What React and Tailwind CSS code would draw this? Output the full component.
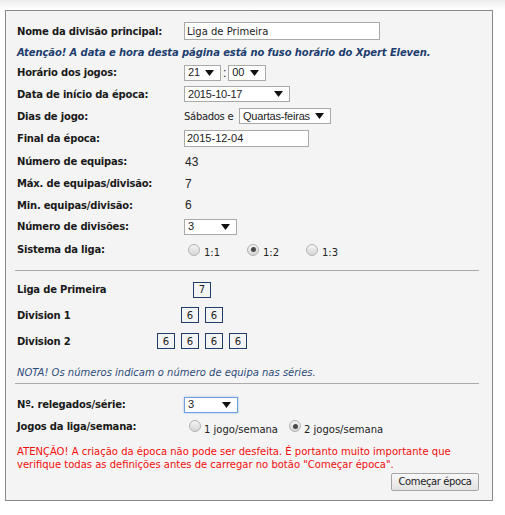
import { useState } from 'react';

const VERDANA = "font-['DejaVu_Sans',Verdana,sans-serif]";
const ARIAL = "font-['Liberation_Sans',Arial,sans-serif]";

function Caret() {
  return (
    <svg width="9" height="6" viewBox="0 0 9 6" className="shrink-0">
      <path d="M0 0 H9 L4.5 6 Z" fill="#111" />
    </svg>
  );
}

function FakeSelect({ value, width, focused }) {
  return (
    <div
      className={`flex items-center justify-between h-[16px] bg-white pl-[3px] pr-[6px] text-[11px] leading-none whitespace-nowrap text-[#222] ${ARIAL} ${
        focused
          ? 'border border-[#6e9fe0] shadow-[0_0_2px_#9cc1f0]'
          : 'border border-[#a9a9a9]'
      }`}
      style={{ width }}
    >
      <span className="tracking-[-0.2px]">{value}</span>
      <Caret />
    </div>
  );
}

function Radio({ checked }) {
  return (
    <span className="relative inline-flex items-center justify-center w-[12px] h-[12px] rounded-full border border-[#b3b3b3] bg-gradient-to-b from-[#f4f4f4] to-[#d6d6d6] shrink-0">
      {checked && <span className="w-[5px] h-[5px] rounded-full bg-[#4a4a4a]" />}
    </span>
  );
}

function Row({ label, h, children }) {
  return (
    <div className="flex items-center" style={{ height: h }}>
      <div className="w-[167px] shrink-0 font-bold text-[10px] tracking-[-0.2px] text-[#1a1a1a] whitespace-nowrap">
        {label}
      </div>
      <div className="flex items-center">{children}</div>
    </div>
  );
}

function TeamBox({ n }) {
  return (
    <div className="w-[18px] h-[16px] border border-[#1f3d6b] flex items-center justify-center text-[10px] text-[#222]">
      {n}
    </div>
  );
}

export default function App() {
  const [system, setSystem] = useState('1:2');
  const [games, setGames] = useState(2);

  const divisions = [
    { name: 'Liga de Primeira', teams: [7], h: 25 },
    { name: 'Division 1', teams: [6, 6], h: 26 },
    { name: 'Division 2', teams: [6, 6, 6, 6], h: 26 },
  ];

  return (
    <div className={`w-[505px] h-[515px] bg-white ${VERDANA}`}>
      <div className="h-[10px] bg-gradient-to-b from-[#ececec] to-white" />
      <div className="ml-[5px] w-[488px] h-[491px] border border-[#8a8a8a] bg-[#f4f4f4] pl-[11px] pr-[13px] pt-[9px]">
        <Row label="Nome da divisão principal:" h={22}>
          <div className="w-[196px] h-[18px] bg-white border border-[#a9a9a9] pl-[2px] flex items-center text-[10px] text-[#222]">
            Liga de Primeira
          </div>
        </Row>
        <div className="h-[20px] flex items-center text-[10px] tracking-[-0.1px] font-bold italic text-[#1d3d6e] whitespace-nowrap">
          Atenção! A data e hora desta página está no fuso horário do Xpert Eleven.
        </div>
        <Row label="Horário dos jogos:" h={21}>
          <FakeSelect value="21" width={37} />
          <span className={`mx-[2px] text-[12px] text-[#222] ${ARIAL}`}>:</span>
          <FakeSelect value="00" width={38} />
        </Row>
        <Row label="Data de início da época:" h={22}>
          <FakeSelect value="2015-10-17" width={106} />
        </Row>
        <Row label="Dias de jogo:" h={22}>
          <span className="w-[55px] text-[10px] tracking-[-0.3px] text-[#222] whitespace-nowrap">Sábados e</span>
          <FakeSelect value="Quartas-feiras" width={92} />
        </Row>
        <Row label="Final da época:" h={23}>
          <div className={`w-[125px] h-[17px] bg-white border border-[#a9a9a9] pl-[2px] flex items-center text-[11px] text-[#222] ${ARIAL}`}>
            2015-12-04
          </div>
        </Row>
        <Row label="Número de equipas:" h={23}>
          <span className={`text-[12px] text-[#222] ml-[1px] ${ARIAL}`}>43</span>
        </Row>
        <Row label="Máx. de equipas/divisão:" h={21}>
          <span className={`text-[12px] text-[#222] ml-[1px] ${ARIAL}`}>7</span>
        </Row>
        <Row label="Min. equipas/divisão:" h={22}>
          <span className={`text-[12px] text-[#222] ml-[1px] ${ARIAL}`}>6</span>
        </Row>
        <Row label="Número de divisões:" h={21}>
          <FakeSelect value="3" width={53} />
        </Row>
        <Row label="Sistema da liga:" h={25}>
          <div className="flex items-center ml-[4px]">
            {['1:1', '1:2', '1:3'].map((s) => (
              <label
                key={s}
                className="w-[59px] flex items-center gap-[4px] cursor-pointer"
                onClick={() => setSystem(s)}
              >
                <Radio checked={system === s} />
                <span className="text-[10px] text-[#222] translate-y-[3px]">{s}</span>
              </label>
            ))}
          </div>
        </Row>

        <div className="mt-[8px] h-px bg-[#aaaaaa] -ml-[2px]" />

        <div className="pt-[6px]">
          {divisions.map((d) => (
            <div key={d.name} className="flex items-center" style={{ height: d.h }}>
              <div className="w-[139px] shrink-0 font-bold text-[10px] tracking-[-0.2px] text-[#1a1a1a]">{d.name}</div>
              <div className="w-[92px] flex justify-center gap-[6px]">
                {d.teams.map((t, i) => (
                  <TeamBox key={i} n={t} />
                ))}
              </div>
            </div>
          ))}
        </div>

        <div className="mt-[10px] h-[16px] flex items-center italic text-[10px] text-[#2c4a78] whitespace-nowrap">
          NOTA! Os números indicam o número de equipa nas séries.
        </div>

        <div className="mt-[3px] h-px bg-[#aaaaaa] -ml-[2px]" />

        <div className="pt-[10px]">
          <Row label="Nº. relegados/série:" h={21}>
            <FakeSelect value="3" width={54} focused />
          </Row>
          <Row label="Jogos da liga/semana:" h={22}>
            <div className="flex items-center ml-[5px]">
              <label className="w-[100px] flex items-center gap-[3px] cursor-pointer" onClick={() => setGames(1)}>
                <Radio checked={games === 1} />
                <span className="text-[10px] text-[#222] translate-y-[3px] whitespace-nowrap">1 jogo/semana</span>
              </label>
              <label className="flex items-center gap-[3px] cursor-pointer" onClick={() => setGames(2)}>
                <Radio checked={games === 2} />
                <span className="text-[10px] text-[#222] translate-y-[3px] whitespace-nowrap">2 jogos/semana</span>
              </label>
            </div>
          </Row>
        </div>

        <p className="mt-[8px] text-[10px] leading-[13px] text-[#f20d0d] whitespace-nowrap">
          ATENÇÃO! A criação da época não pode ser desfeita. É portanto muito importante que
          <br />
          verifique todas as definições antes de carregar no botão "Começar época".
        </p>

        <div className="flex justify-end mt-[2px]">
          <button
            type="button"
            className="w-[88px] h-[18px] border border-[#a5a5a5] rounded-[2px] bg-gradient-to-b from-[#f8f8f8] to-[#e2e2e2] text-[10px] tracking-[-0.4px] text-[#222] leading-none whitespace-nowrap"
          >
            Começar época
          </button>
        </div>
      </div>
    </div>
  );
}
